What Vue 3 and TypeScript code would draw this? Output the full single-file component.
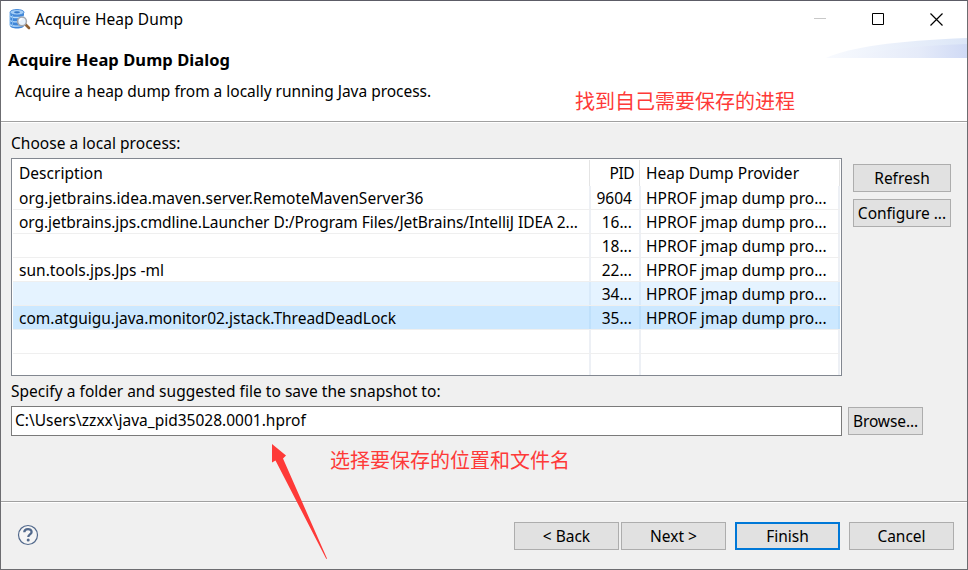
<script setup lang="ts">
interface Process {
  description: string
  pid: string
  provider: string
  state?: 'hover' | 'selected'
  fit?: string
}

const provider = 'HPROF jmap dump pro...'

const processes: Process[] = [
  { description: 'org.jetbrains.idea.maven.server.RemoteMavenServer36', pid: '9604', provider },
  {
    description: 'org.jetbrains.jps.cmdline.Launcher D:/Program Files/JetBrains/IntelliJ IDEA 2...',
    pid: '16...',
    provider,
    fit: 'tight',
  },
  { description: '', pid: '18...', provider },
  { description: 'sun.tools.jps.Jps -ml', pid: '22...', provider },
  { description: '', pid: '34...', provider, state: 'hover' },
  {
    description: 'com.atguigu.java.monitor02.jstack.ThreadDeadLock',
    pid: '35...',
    provider,
    state: 'selected',
    fit: 'normal',
  },
  { description: '', pid: '', provider: '' },
  { description: '', pid: '', provider: '' },
]
</script>

<template>
  <div class="window">
    <header class="banner">
      <div class="titlebar">
        <svg class="app-icon" width="22" height="22" viewBox="0 0 22 22">
          <path d="M1 3.2v13.2c0 1.8 3 3 7 3s7-1.200 7-3V3.200z" fill="#3f86d8" />
          <path d="M1 7c1.500 2 12.500 2 14 0M1 11.300c1.500 2 12.500 2 14 0M1 15.500c1.500 2 10 2 12 1" fill="none" stroke="#b9dcfa" stroke-width="1.300" />
          <path d="M1 4v12.500M3.500 5.500v12" stroke="#7db5ed" stroke-width="1" />
          <ellipse cx="8" cy="3.300" rx="7" ry="2.800" fill="#a5cef5" stroke="#4a8ddb" />
          <ellipse cx="8" cy="3.300" rx="3" ry="1.100" fill="#3679ca" />
          <path d="M16.500 15.500l3.500 3.500" stroke="#8e6034" stroke-width="2.600" stroke-linecap="round" />
          <circle cx="13" cy="12.300" r="4.400" fill="#e7f1fb" stroke="#a3a7ae" stroke-width="1.500" />
          <path d="M10.500 12c.3-1.500 1.300-2.300 2.800-2.300" fill="none" stroke="#fff" stroke-width="1.300" />
        </svg>
        <span class="title">Acquire Heap Dump</span>
        <div class="controls">
          <svg width="13" height="13" viewBox="0 0 13 13"><path d="M0 5.500h12" stroke="#c8c8c8" /></svg>
          <svg width="13" height="13" viewBox="0 0 13 13"><path d="M.5.5h11v11H.5z" fill="none" stroke="#000" /></svg>
          <svg width="13" height="13" viewBox="0 0 13 13"><path d="M.5.500l12 12M12.500.5l-12 12" stroke="#000" stroke-width="1.200" /></svg>
        </div>
      </div>
      <h1>Acquire Heap Dump Dialog</h1>
      <p>Acquire a heap dump from a locally running Java process.</p>
      <svg class="swoosh" width="141" height="20" viewBox="0 0 141 20">
        <defs>
          <linearGradient id="outer"><stop offset="0" stop-color="#f8fafe" /><stop offset="1" stop-color="#dce6f7" /></linearGradient>
          <linearGradient id="inner"><stop offset="0" stop-color="#f4f7fd" /><stop offset=".6" stop-color="#e5ebf9" /><stop offset="1" stop-color="#d0daf5" /></linearGradient>
        </defs>
        <path d="M0 20Q34 4 141 0V20z" fill="url(#outer)" />
        <path d="M20 20Q66 8 141 6V20z" fill="url(#inner)" />
      </svg>
    </header>

    <main class="body">
      <label class="caption">Choose a local process:</label>
      <div class="picker">
        <div class="table">
          <div class="row head">
            <span class="cell">Description</span>
            <span class="cell pid">PID</span>
            <span class="cell last">Heap Dump Provider</span>
          </div>
          <div v-for="(p, i) in processes" :key="i" class="row" :class="p.state">
            <span class="cell" :class="p.fit">{{ p.description }}</span>
            <span class="cell pid">{{ p.pid }}</span>
            <span class="cell last">{{ p.provider }}</span>
          </div>
        </div>
        <div class="side">
          <button>Refresh</button>
          <button>Configure ...</button>
        </div>
      </div>
      <label class="caption path-caption">Specify a folder and suggested file to save the snapshot to:</label>
      <div class="path-row">
        <div class="path">C:\Users\zzxx\java_pid35028.0001.hprof</div>
        <button class="browse">Browse...</button>
      </div>
    </main>

    <footer class="footer">
      <svg class="help" width="22" height="22" viewBox="0 0 22 22">
        <circle cx="11" cy="11" r="9.500" fill="#f5f5f5" stroke="#52698c" stroke-width="1.200" />
        <path d="M7.300 8.300c0-4.300 7.300-4.300 7.300-.3 0 2.300-3.300 2.500-3.300 4.900" fill="none" stroke="#52698c" stroke-width="2.300" />
        <circle cx="11.200" cy="16" r="1.500" fill="#52698c" />
      </svg>
      <button>&lt; Back</button>
      <button class="next">Next &gt;</button>
      <button class="primary">Finish</button>
      <button>Cancel</button>
    </footer>

    <span class="note note-process">找到自己需要保存的进程</span>
    <span class="note note-path">选择要保存的位置和文件名</span>
    <svg class="arrow" width="56" height="117" viewBox="0 0 56 117">
      <path d="M0 0L14 11.500L11 14.500L55 114.500L54.300 115L3.500 16.500L0 18.500z" fill="#fe3a38" />
    </svg>
  </div>
</template>

<style>
body {
  margin: 0;
  background: #f0f0f0;
}
</style>

<style scoped>
.window {
  position: relative;
  box-sizing: border-box;
  width: 968px;
  height: 570px;
  overflow: hidden;
  display: flex;
  flex-direction: column;
  border: 1px solid #6c6c70;
  border-top-color: #5c5c66;
  background: #f0f0f0;
  color: #000;
  font: 15.5px/24px "Noto Sans", "Open Sans", sans-serif;
  letter-spacing: 0.03px;
  white-space: nowrap;
}

.banner {
  position: relative;
  box-sizing: border-box;
  height: 122px;
  flex: none;
  background: #fff;
  border-bottom: 1px solid #fff;
  box-shadow: inset 0 -1px #a0a0a0;
}

.titlebar {
  display: flex;
  align-items: center;
  height: 37px;
  padding: 0 24px 0 8px;
}

.app-icon {
  margin-right: 4px;
}

.title {
  margin-top: -2px;
  letter-spacing: 0.08px;
}

.controls {
  display: flex;
  gap: 45px;
  margin-left: auto;
}

.controls svg {
  display: block;
}

h1 {
  margin: 10px 0 0 7px;
  font-size: 16.5px;
  line-height: 24px;
  font-weight: 700;
  letter-spacing: 0.07px;
}

p {
  margin: 7px 0 0 14px;
  letter-spacing: -0.02px;
}

.swoosh {
  position: absolute;
  right: 0;
  top: 37px;
}

.body {
  flex: 1;
  padding: 8px 0 0 10px;
}

.caption {
  display: block;
  height: 27px;
  line-height: 25px;
}

.picker {
  display: flex;
  gap: 11px;
}

.table {
  box-sizing: border-box;
  width: 831px;
  height: 218px;
  padding: 0 1px;
  border: 1px solid #828790;
  background: #fff;
  overflow: hidden;
}

.row {
  display: grid;
  grid-template-columns: 578px 50px 199px;
  box-sizing: border-box;
  height: 24px;
  border-bottom: 1px solid #efefef;
}

.head {
  grid-template-columns: 577px 50px 200px;
  height: 27px;
  padding-top: 1px;
  border: 0;
}

.cell {
  box-sizing: border-box;
  padding-left: 6px;
  border-right: 2px solid #edf0f5;
  overflow: hidden;
}

.cell.last {
  padding-left: 5px;
}

.head .cell {
  border-right: 1px solid #e4e4e4;
  line-height: 26px;
}

.head .last {
  padding-left: 6px;
}

.cell.tight {
  letter-spacing: -0.055px;
}

.cell.normal {
  letter-spacing: -0.01px;
}

.cell.pid {
  padding-right: 7px;
  padding-left: 0;
  text-align: right;
}

.head .cell.pid {
  padding-right: 5px;
  letter-spacing: -0.5px;
}

.hover {
  background: #e5f3ff;
}

.hover .cell {
  border-right-color: #d9eafa;
}

.selected {
  background: #cce8ff;
}

.selected .cell {
  border-right-color: #bfe0fb;
}

button {
  box-sizing: border-box;
  width: 98px;
  height: 28px;
  padding: 0;
  border: 1px solid #adadad;
  border-radius: 0;
  background: #e1e1e1;
  color: #000;
  font: inherit;
  letter-spacing: -0.02px;
}

.side {
  display: flex;
  flex-direction: column;
  gap: 7px;
  padding-top: 6px;
}

.path-caption {
  height: 30px;
  line-height: 31px;
}

.path-row {
  display: flex;
  gap: 6px;
}

.path {
  box-sizing: border-box;
  width: 831px;
  height: 30px;
  padding-left: 3px;
  border: 1px solid #7a7a7a;
  background: #fff;
  line-height: 26px;
  letter-spacing: 0;
}

.browse {
  width: 75px;
  margin-top: 1px;
  letter-spacing: -0.1px;
}

.footer {
  display: flex;
  align-items: flex-start;
  box-sizing: border-box;
  height: 68px;
  flex: none;
  padding: 20px 13px 0 16px;
  border-top: 1px solid #a0a0a0;
  box-shadow: inset 0 1px #fff;
}

.help {
  margin: 2px auto 0 0;
}

.footer button {
  width: 105px;
  margin-left: 9px;
}

.footer .next {
  margin-left: 2px;
}

.footer .primary {
  border: 2px solid #0078d7;
}

.note {
  position: absolute;
  color: #fe3a38;
  font-family: "Noto Sans CJK SC", sans-serif;
  font-size: 20px;
  font-weight: 400;
  line-height: 30px;
  letter-spacing: 0;
}

.note-process {
  left: 574px;
  top: 85px;
}

.note-path {
  left: 329px;
  top: 444px;
}

.arrow {
  position: absolute;
  left: 271px;
  top: 443px;
}
</style>
